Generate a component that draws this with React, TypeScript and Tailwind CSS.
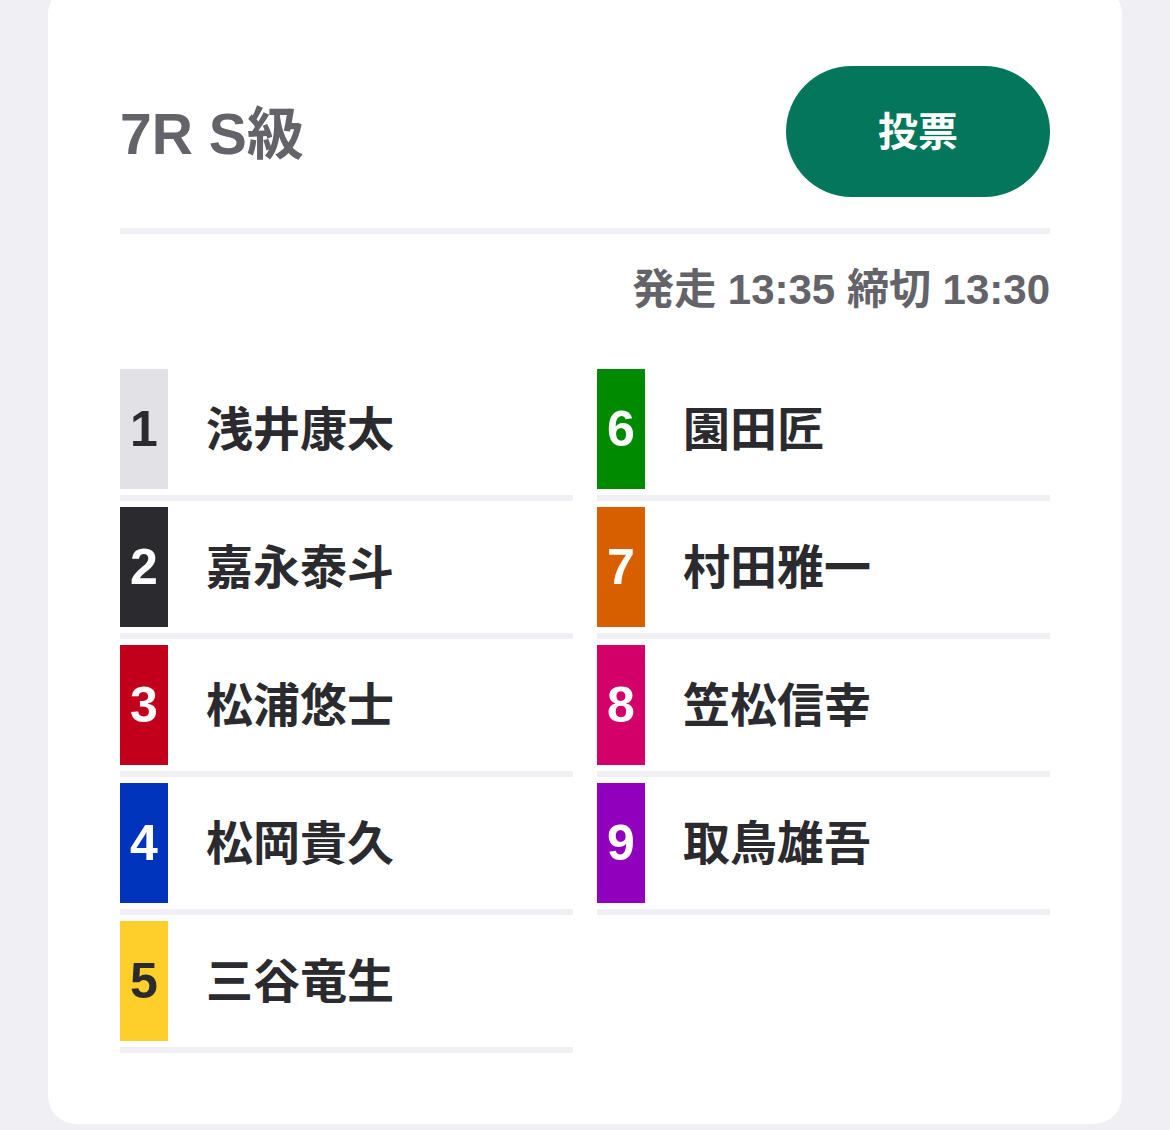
import React from 'react';

interface Racer {
  no: number;
  name: string;
  bg: string;
  fg: string;
}

const left: Racer[] = [
  { no: 1, name: '浅井康太', bg: 'bg-[#e1e1e6]', fg: 'text-[#2a2a2f]' },
  { no: 2, name: '嘉永泰斗', bg: 'bg-[#2a2a2f]', fg: 'text-white' },
  { no: 3, name: '松浦悠士', bg: 'bg-[#c2001b]', fg: 'text-white' },
  { no: 4, name: '松岡貴久', bg: 'bg-[#0034bd]', fg: 'text-white' },
  { no: 5, name: '三谷竜生', bg: 'bg-[#fecf2b]', fg: 'text-[#2a2a2f]' },
];

const right: Racer[] = [
  { no: 6, name: '園田匠', bg: 'bg-[#008a00]', fg: 'text-white' },
  { no: 7, name: '村田雅一', bg: 'bg-[#d75f00]', fg: 'text-white' },
  { no: 8, name: '笠松信幸', bg: 'bg-[#d3006a]', fg: 'text-white' },
  { no: 9, name: '取鳥雄吾', bg: 'bg-[#9000bd]', fg: 'text-white' },
];

const font = { fontFamily: '"Liberation Sans", "Noto Sans CJK JP", sans-serif' };

const RacerRow: React.FC<{ r: Racer }> = ({ r }) => (
  <div>
    <div className="flex items-center h-[120px]">
      <div className={`${r.bg} ${r.fg} w-12 h-full flex items-center justify-center text-[50px] font-bold leading-none`}>
        {r.no}
      </div>
      <span className="ml-[38px] text-[47px] font-bold leading-none text-[#2a2a2f]">{r.name}</span>
    </div>
    <div className="h-[6px] my-[6px] bg-[#efeff4]" />
  </div>
);

const App: React.FC = () => {
  return (
    <div className="w-[1170px] h-[1130px] overflow-hidden bg-[#efeff4] px-12" style={font}>
      <div className="-mt-[14px] bg-white rounded-[28px] px-[72px] pt-[80px] pb-[65px]">
        <div className="flex items-center justify-between">
          <h1 className="pt-[6px] text-[57px] font-bold leading-none text-[#636369]">7R S級</h1>
          <button className="w-[264px] h-[131px] rounded-full bg-[#03765b] text-white text-[40px] font-bold leading-none">
            投票
          </button>
        </div>
        <div className="mt-[31px] h-[6px] bg-[#efeff4]" />
        <div className="mt-[35px] text-right text-[42px] font-bold leading-none text-[#636369]">
          発走 13:35 締切 13:30
        </div>
        <div className="mt-[58px] grid grid-cols-2 gap-x-[24px]">
          <div>
            {left.map((r) => (
              <RacerRow key={r.no} r={r} />
            ))}
          </div>
          <div>
            {right.map((r) => (
              <RacerRow key={r.no} r={r} />
            ))}
          </div>
        </div>
      </div>
    </div>
  );
};

export default App;
